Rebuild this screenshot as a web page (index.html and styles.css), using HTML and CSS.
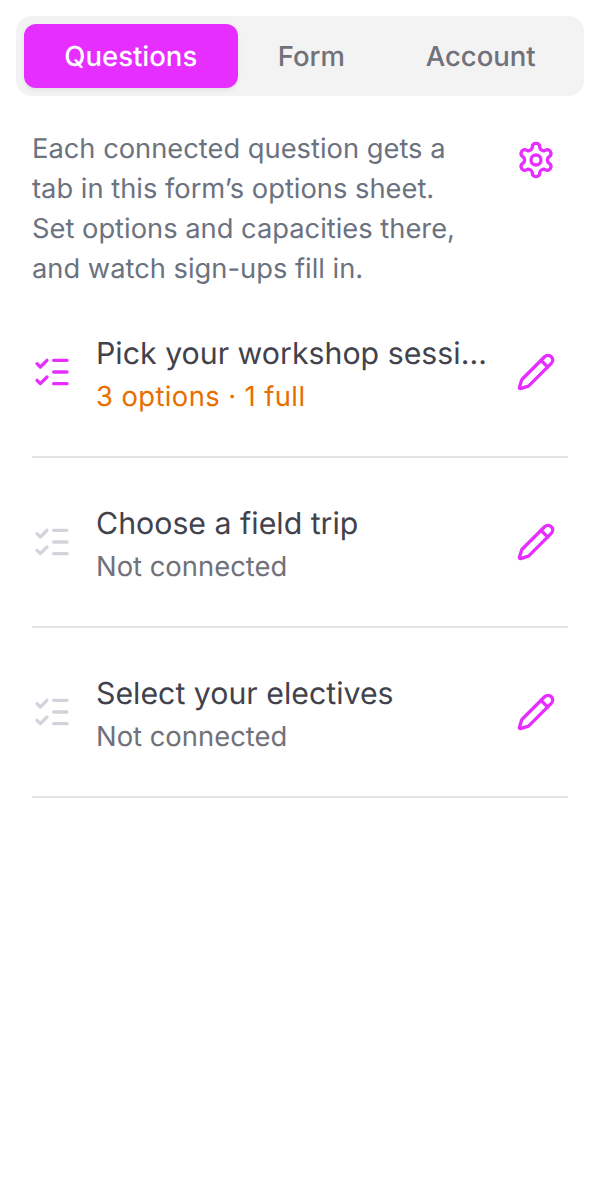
FILE: index.html
```html
<!DOCTYPE html>
<html lang="en">
<head>
<meta charset="utf-8">
<title>Sign-up limits</title>
<link rel="stylesheet" href="styles.css">
</head>
<body>
<main class="app">
  <nav class="tabs">
    <div class="tab tab-active">Questions</div>
    <div class="tab">Form</div>
    <div class="tab">Account</div>
  </nav>
  <section class="intro">
    <p class="intro-text">Each connected question gets a tab in this form’s options sheet. Set options and capacities there, and watch sign-ups fill in.</p>
    <svg class="icon icon-accent" viewBox="0 0 24 24"><path d="M12.22 2h-.44a2 2 0 0 0-2 2v.18a2 2 0 0 1-1 1.73l-.43.25a2 2 0 0 1-2 0l-.15-.08a2 2 0 0 0-2.73.73l-.22.38a2 2 0 0 0 .73 2.73l.15.1a2 2 0 0 1 1 1.72v.51a2 2 0 0 1-1 1.74l-.15.09a2 2 0 0 0-.73 2.73l.22.38a2 2 0 0 0 2.73.73l.15-.08a2 2 0 0 1 2 0l.43.25a2 2 0 0 1 1 1.73V20a2 2 0 0 0 2 2h.44a2 2 0 0 0 2-2v-.18a2 2 0 0 1 1-1.73l.43-.25a2 2 0 0 1 2 0l.15.08a2 2 0 0 0 2.73-.73l.22-.39a2 2 0 0 0-.73-2.73l-.15-.08a2 2 0 0 1-1-1.74v-.5a2 2 0 0 1 1-1.74l.15-.09a2 2 0 0 0 .73-2.73l-.22-.38a2 2 0 0 0-2.73-.73l-.15.08a2 2 0 0 1-2 0l-.43-.25a2 2 0 0 1-1-1.73V4a2 2 0 0 0-2-2z"/><circle cx="12" cy="12" r="3"/></svg>
  </section>
  <ul class="list">
    <li class="row">
      <svg class="icon icon-accent" viewBox="0 0 24 24"><path d="M13 5h8M13 12h8M13 19h8M3 17l2 2 4-4M3 7l2 2 4-4"/></svg>
      <div class="row-text">
        <div class="row-title">Pick your workshop session preference</div>
        <div class="row-sub row-sub-warn">3 options · 1 full</div>
      </div>
      <svg class="icon icon-accent" viewBox="0 0 24 24"><path d="M21.174 6.812a1 1 0 0 0-3.986-3.987L3.842 16.174a2 2 0 0 0-.5.83l-1.321 4.352a.5.5 0 0 0 .623.622l4.353-1.32a2 2 0 0 0 .83-.497z"/><path d="m15 5 4 4"/></svg>
    </li>
    <li class="row">
      <svg class="icon icon-muted" viewBox="0 0 24 24"><path d="M13 5h8M13 12h8M13 19h8M3 17l2 2 4-4M3 7l2 2 4-4"/></svg>
      <div class="row-text">
        <div class="row-title">Choose a field trip</div>
        <div class="row-sub">Not connected</div>
      </div>
      <svg class="icon icon-accent" viewBox="0 0 24 24"><path d="M21.174 6.812a1 1 0 0 0-3.986-3.987L3.842 16.174a2 2 0 0 0-.5.83l-1.321 4.352a.5.5 0 0 0 .623.622l4.353-1.32a2 2 0 0 0 .83-.497z"/><path d="m15 5 4 4"/></svg>
    </li>
    <li class="row">
      <svg class="icon icon-muted" viewBox="0 0 24 24"><path d="M13 5h8M13 12h8M13 19h8M3 17l2 2 4-4M3 7l2 2 4-4"/></svg>
      <div class="row-text">
        <div class="row-title">Select your electives</div>
        <div class="row-sub">Not connected</div>
      </div>
      <svg class="icon icon-accent" viewBox="0 0 24 24"><path d="M21.174 6.812a1 1 0 0 0-3.986-3.987L3.842 16.174a2 2 0 0 0-.5.83l-1.321 4.352a.5.5 0 0 0 .623.622l4.353-1.32a2 2 0 0 0 .83-.497z"/><path d="m15 5 4 4"/></svg>
    </li>
  </ul>
</main>
</body>
</html>
```
FILE: styles.css
```css
* { box-sizing: border-box; }
html, body { margin: 0; padding: 0; background: #fff; }
body {
  font-family: Inter, "Liberation Sans", sans-serif;
  text-rendering: geometricPrecision;
}
.app { width: 600px; height: 1200px; padding: 16px 32px 0; overflow: hidden; }
.tabs {
  display: flex;
  margin: 0 -16px;
  padding: 8px;
  background: #f3f3f4;
  border-radius: 16px;
}
.tab {
  flex: 1 1 auto;
  height: 64px;
  display: flex;
  align-items: center;
  justify-content: center;
  border-radius: 12px;
  font-size: 27.5px;
  font-weight: 500;
  color: #71717a;
}
.tab-active {
  background: #e52eff;
  color: #fff;
  box-shadow: 0 2px 4px rgba(0, 0, 0, 0.08);
}
.intro {
  display: flex;
  justify-content: space-between;
  align-items: flex-start;
  gap: 24px;
  padding: 33px 12px 0 0;
}
.intro-text {
  margin: 0 0 -1px;
  width: 430px;
  font-size: 27.3px;
  line-height: 40px;
  color: #6b7280;
}
.icon {
  flex: none;
  width: 40px;
  height: 40px;
  margin-top: 11px;
  fill: none;
  stroke-width: 2;
  stroke-linecap: round;
  stroke-linejoin: round;
}
.icon-accent { stroke: #e52eff; }
.icon-muted { stroke: #d1d5db; }
.list { list-style: none; margin: 0; padding: 0; }
.row {
  display: flex;
  align-items: center;
  gap: 24px;
  height: 170px;
  padding-right: 12px;
  border-bottom: 2px solid #e4e4e7;
}
.row .icon { margin-top: 0; }
.row-text { flex: 1 1 0; min-width: 0; padding-top: 6px; }
.row-title {
  font-size: 30.3px;
  line-height: 40px;
  color: #41424c;
  white-space: nowrap;
  overflow: hidden;
  text-overflow: ellipsis;
}
.row-sub {
  margin-top: 2px;
  font-size: 27.4px;
  line-height: 40px;
  color: #71717a;
}
.row-sub-warn { color: #e76f00; letter-spacing: 0.4px; }
```
